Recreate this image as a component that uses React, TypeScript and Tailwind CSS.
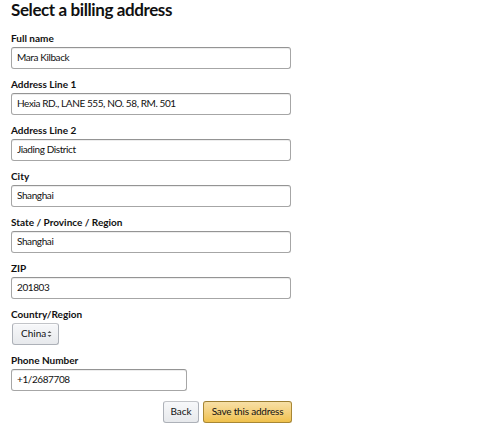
import React from "react";

const inputCls =
  "block h-[22px] rounded-[3px] border border-[#a6a6a6] border-t-[#949494] bg-white pl-[5px] pr-[5px] pb-[2px] text-[10px] leading-[18px] tracking-[-0.4px] text-[#111] shadow-[inset_0_1px_0_rgba(0,0,0,0.07)] outline-none";

function Field({ label, value, width = "w-[280px]" }: { label: string; value: string; width?: string }) {
  return (
    <div className="mb-[9px]">
      <label className="mb-[2px] block h-[13px] text-[10px] font-bold leading-[13px] text-[#111]">{label}</label>
      <input className={`${inputCls} ${width}`} defaultValue={value} readOnly />
    </div>
  );
}

export default function App() {
  return (
    <div
      className="h-[432px] w-[500px] bg-white pl-[11px] text-[#111]"
      style={{ fontFamily: 'Lato, "Open Sans", sans-serif' }}
    >
      <h1 className="h-[32px] text-[17px] font-bold leading-[20px] tracking-[-0.4px]">Select a billing address</h1>
      <Field label="Full name" value="Mara Kilback" />
      <Field label="Address Line 1" value="Hexia RD., LANE 555, NO. 58, RM. 501" />
      <Field label="Address Line 2" value="Jiading District" />
      <Field label="City" value="Shanghai" />
      <Field label="State / Province / Region" value="Shanghai" />
      <Field label="ZIP" value="201803" />
      <div className="mb-[9px]">
        <label className="mb-[2px] block h-[13px] text-[10px] font-bold leading-[13px] text-[#111]">Country/Region</label>
        <div className="ml-[1px] flex h-[22px] w-[47px] items-center justify-between rounded-[3px] border border-[#adb1b8] border-t-[#c2c4c8] bg-gradient-to-b from-[#f7f8fa] to-[#e7e9ec] pb-[1px] pl-[8px] pr-[6px] text-[10px] text-[#111] shadow-[0_1px_0_rgba(255,255,255,0.6)_inset]">
          <span>China</span>
          <svg width="5" height="8" viewBox="0 0 5 8" className="text-[#555]">
            <path d="M0.5 3 L2.5 1 L4.5 3 Z" fill="currentColor" />
            <path d="M0.5 5 L2.5 7 L4.5 5 Z" fill="currentColor" />
          </svg>
        </div>
      </div>
      <Field label="Phone Number" value="+1/2687708" width="w-[176px]" />
      <div className="flex w-[281px] justify-end gap-[4px] pt-[1px]">
        <button className="flex h-[22px] w-[36px] items-center justify-center rounded-[3px] border border-[#adb1b8] border-t-[#c2c4c8] bg-gradient-to-b from-[#f7f8fa] to-[#e7e9ec] pb-[1px] text-[10px] text-[#111]">
          Back
        </button>
        <button className="flex h-[22px] w-[89px] items-center justify-center rounded-[3px] border border-[#a88734] border-t-[#9c7e31] bg-gradient-to-b from-[#f7dfa5] to-[#f0c14b] pb-[1px] text-[10px] tracking-[-0.2px] text-[#111]">
          Save this address
        </button>
      </div>
    </div>
  );
}
